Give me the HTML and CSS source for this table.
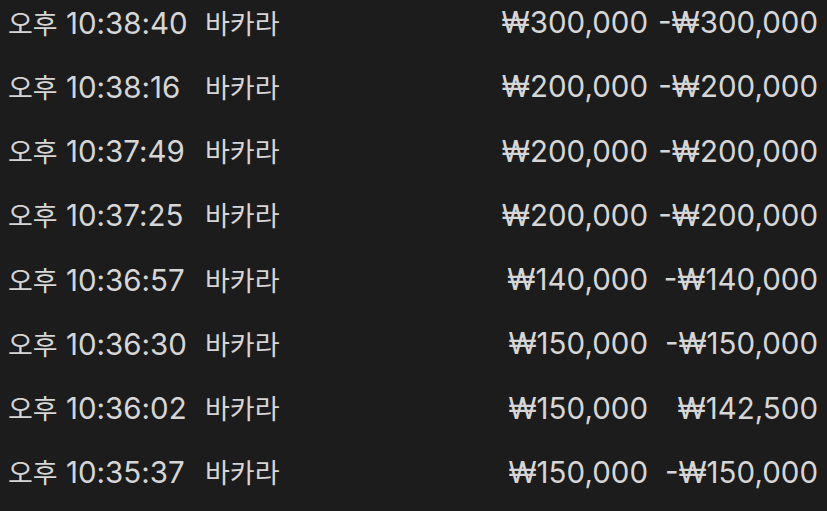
FILE: index.html
```html
<!DOCTYPE html>
<html lang="ko">
<head>
<meta charset="utf-8">
<link rel="stylesheet" href="styles.css">
</head>
<body>
<div class="list">
  <div class="row"><span class="time"><span class="ko">오후</span> 10:38:40</span><span class="ko">바카라</span><span class="bet">₩300,000</span><span class="result">-₩300,000</span></div>
  <div class="row"><span class="time"><span class="ko">오후</span> 10:38:16</span><span class="ko">바카라</span><span class="bet">₩200,000</span><span class="result">-₩200,000</span></div>
  <div class="row"><span class="time"><span class="ko">오후</span> 10:37:49</span><span class="ko">바카라</span><span class="bet">₩200,000</span><span class="result">-₩200,000</span></div>
  <div class="row"><span class="time"><span class="ko">오후</span> 10:37:25</span><span class="ko">바카라</span><span class="bet">₩200,000</span><span class="result">-₩200,000</span></div>
  <div class="row"><span class="time"><span class="ko">오후</span> 10:36:57</span><span class="ko">바카라</span><span class="bet">₩140,000</span><span class="result">-₩140,000</span></div>
  <div class="row"><span class="time"><span class="ko">오후</span> 10:36:30</span><span class="ko">바카라</span><span class="bet">₩150,000</span><span class="result">-₩150,000</span></div>
  <div class="row"><span class="time"><span class="ko">오후</span> 10:36:02</span><span class="ko">바카라</span><span class="bet">₩150,000</span><span class="result">₩142,500</span></div>
  <div class="row"><span class="time"><span class="ko">오후</span> 10:35:37</span><span class="ko">바카라</span><span class="bet">₩150,000</span><span class="result">-₩150,000</span></div>
</div>
</body>
</html>
```
FILE: styles.css
```css
html, body {
  margin: 0;
  padding: 0;
  background: #1c1c1c;
  height: 100%;
  overflow: hidden;
}
.list {
  margin-top: -10px;
  padding: 0 9px 0 8px;
  font-family: Inter, "Noto Sans CJK KR", sans-serif;
  font-size: 29.5px;
  color: #d6d6d6;
}
.row {
  display: grid;
  grid-template-columns: 197px 1fr 160px 170px;
  align-items: center;
  height: 64.25px;
}
.ko {
  font-size: 27px;
}
.bet, .result {
  text-align: right;
}
```
